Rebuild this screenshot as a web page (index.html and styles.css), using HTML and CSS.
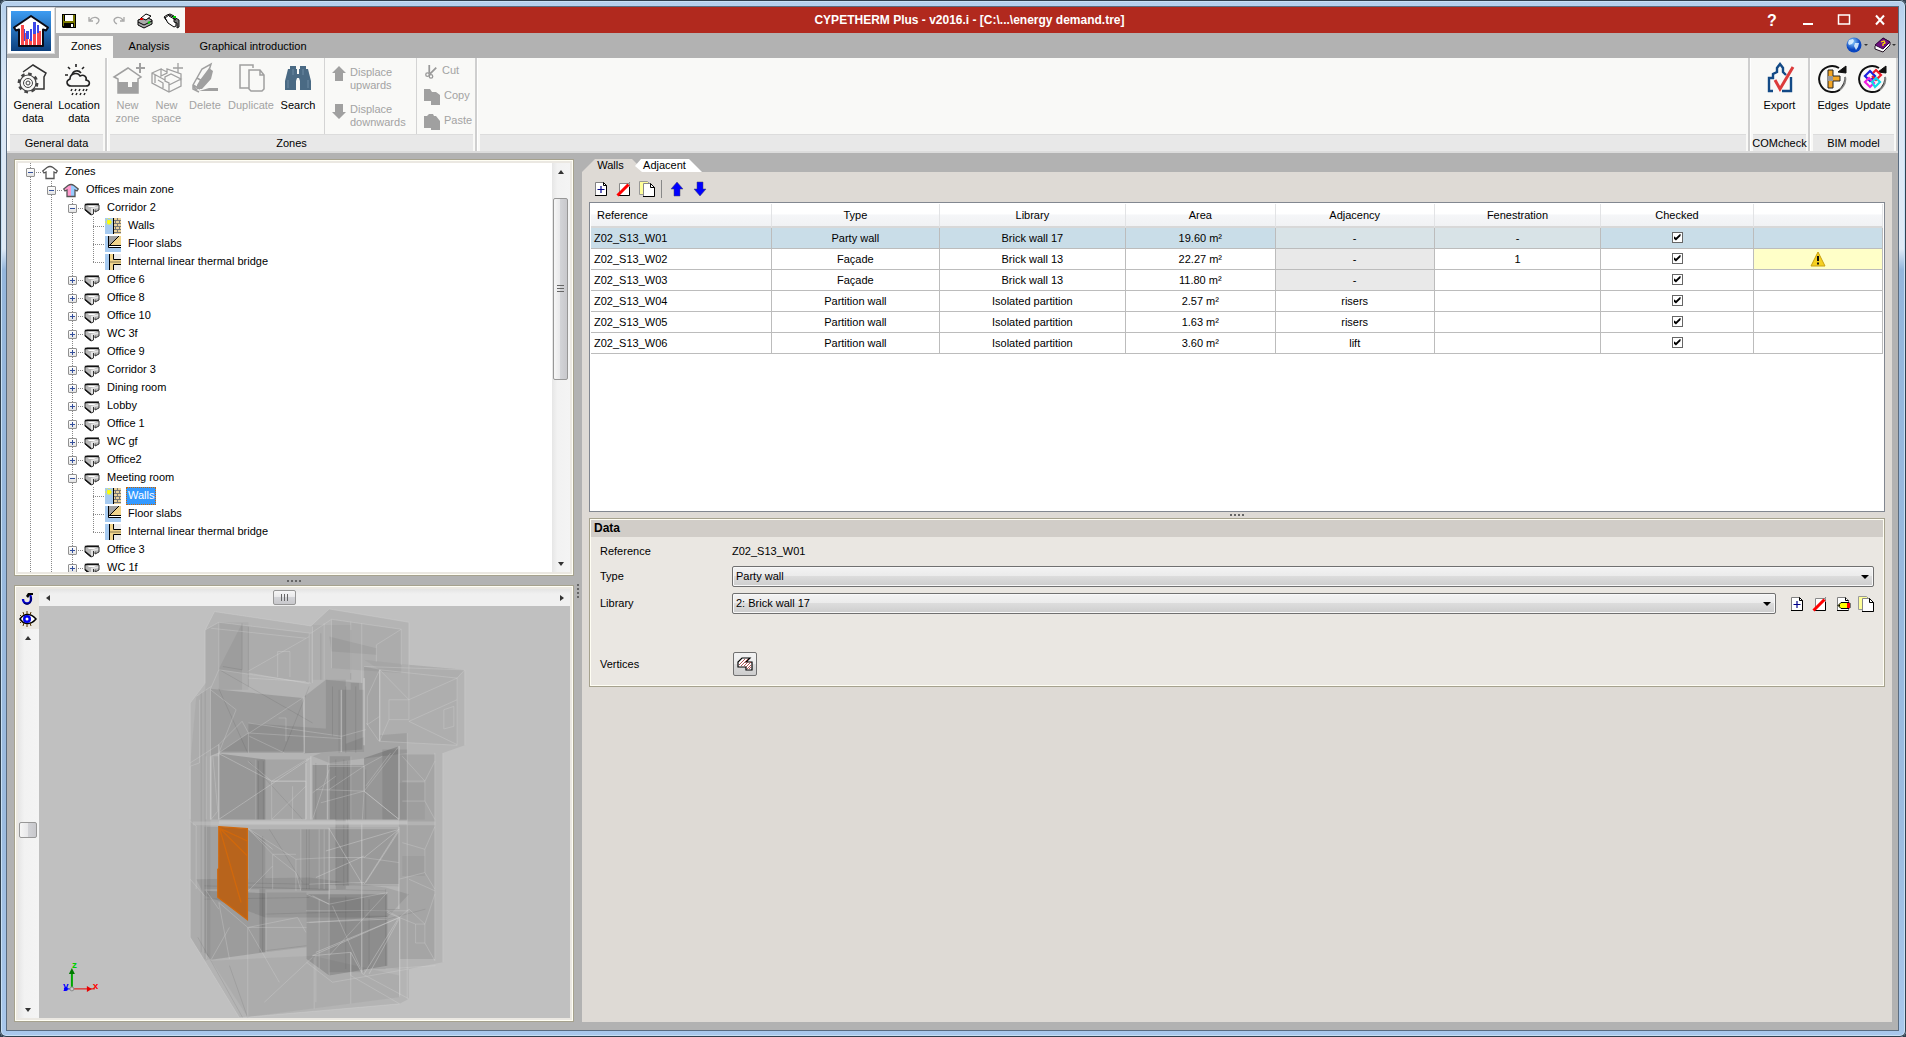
FILE: index.html
```html
<!DOCTYPE html>
<html lang="en">
<head>
<meta charset="utf-8">
<title>CYPETHERM Plus</title>
<link rel="stylesheet" href="styles.css">
</head>
<body>
<svg class="sprite" aria-hidden="true">
  <symbol id="i-space" viewBox="0 0 16 16"><path d="M1 5l2-1h12v6l-4 2V9H9v5l-2 1-6-5z" fill="#b8b8b8"/><path d="M3 5h11l-4 2H5z" fill="#fff"/><path d="M7 8l8-2v2l-6 1v5l-2 1z" fill="#e4e4e4"/><path d="M15 5v5l-4 2V9.500M9.500 9v5L7 15l-6-5V5l2-1h12" fill="none" stroke="#333"/><path d="M.8 4.500h14M1 9.500L7 14.500" stroke="#111" stroke-width="1.600"/></symbol>
  <symbol id="i-wall" viewBox="0 0 16 16"><path fill="#a6caf0" d="M0 0h8v16H0z"/><path fill="#e8d09a" d="M9 0h7v16H9z"/><path d="M8.500 0v16" stroke="#000"/><path d="M9 2.500h7M9 5.500h7M9 8.500h7M9 11.500h7M9 14.500h7M12.500 0v2M10.500 3v2M14.500 3v2M12.500 6v2M10.500 9v2M14.500 9v2M12.500 12v2" stroke="#777"/><circle cx="4" cy="4" r="2" fill="#ff0"/><path d="M4 0v8M0 4h8M1 1l6 6M7 1L1 7" stroke="#ff0" stroke-dasharray="1 1"/></symbol>
  <symbol id="i-floor" viewBox="0 0 16 16"><path fill="#a6caf0" d="M0 0h16v16H0z"/><path fill="#a0a0a0" d="M4 0h10L4 10z"/><path fill="#f0d48c" d="M14 0h2v9H5z"/><path d="M3.500 0v11.500H16M4 10L14 0M4 9.500h12" fill="none" stroke="#000"/><path fill="#fff" d="M4 10h12v1H4z"/></symbol>
  <symbol id="i-bridge" viewBox="0 0 16 16"><path fill="#ececec" d="M0 0h16v16H0z"/><path fill="#a6caf0" d="M0 0h4v16H0z"/><path fill="#f0d48c" d="M5 0h3v16H5zM8 6h8v4H8z"/><path d="M4.500 0v16M8.500 0v5.500H16M16 10.500H8.500V16" fill="none" stroke="#000"/><path d="M5 8h11" stroke="#8a7a50"/></symbol>
  <symbol id="i-new" viewBox="0 0 16 16"><path d="M2.500 1.500h8l3 3v10h-11z" fill="#fff" stroke="#808080"/><path d="M2 14.500h11.500V4.500l-3-3v3h3" fill="none" stroke="#000"/><path d="M8 5v7M4.500 8.500h7" stroke="#00008b" stroke-width="1.200"/></symbol>
  <symbol id="i-del" viewBox="0 0 16 16"><path d="M3.500 2.500h10v12h-10z" fill="#fff" stroke="#888"/><path d="M3 14.500h10.500V6" fill="none" stroke="#000"/><path d="M2 14L14 1" stroke="#888"/><path d="M1.500 14.500L12.500 3.500" stroke="#f00" stroke-width="3"/></symbol>
  <symbol id="i-dup" viewBox="0 0 16 16"><path d="M.5.500h8l2 2v11H.5z" fill="#ff9" stroke="#999"/><path d="M4.500 2.500h7l4 4v9h-11z" fill="#fff" stroke="#888"/><path d="M4 15.500h11.500v-9l-4-4v4h4" fill="none" stroke="#000"/></symbol>
  <symbol id="i-edit" viewBox="0 0 16 16"><path d="M2.500 1.500h8l3 3v10h-11z" fill="#fff" stroke="#808080"/><path d="M2 14.500h11.500M10.500 1.500v3h3" fill="none" stroke="#000"/><path d="M3 9.500l3-3h8l1 1v4l-1 1H6z" fill="#ff0" stroke="#000"/><path fill="#f00" d="M12 7h3v5h-3z"/><path fill="#000" d="M3 9.500l2-1v2z"/></symbol>
  <symbol id="i-up" viewBox="0 0 14 16"><path d="M7 1l6 7h-3v7H4V8H1z" fill="#00f" stroke="#446" stroke-width=".5"/></symbol>
  <symbol id="i-gup" viewBox="0 0 14 16"><path d="M7 0l7 7h-3v8H3V7H0z" fill="#a0a0a0"/></symbol>
  <symbol id="i-arrow" viewBox="0 0 8 8"><path d="M1 6l3-4 3 4z" fill="#333"/></symbol>
  <symbol id="i-turn" viewBox="0 0 32 32"><path d="M22 5a13 13 0 1 0 6 9" fill="none" stroke="#111" stroke-width="2"/><path d="M28 14a13 13 0 0 1-5 13" fill="none" stroke="#f9f9f7" stroke-width="2" opacity=".5"/><path d="M29 3v7l-8-1z" fill="#111" stroke="#111"/></symbol>
</svg>

<div class="window">
  <div class="client">
    <header class="top">
      <button class="app" aria-label="Application menu">
        <svg width="40" height="40" viewBox="0 0 40 40"><defs><linearGradient id="ab" x2="0" y2="1"><stop stop-color="#3d9cf2"/><stop offset="1" stop-color="#0b3f7d"/></linearGradient></defs><path fill="url(#ab)" d="M0 0h40v40H0z"/><path d="M20 5l17 11.500-2 3-3-1V35H8V18.500l-3 1-2-3z" fill="#fff" stroke="#0a0a14" stroke-width="2" stroke-linejoin="round"/><path fill="#f8484a" d="M10 14h3v20h-3zM14 22h3v12h-3zM18 28h3v6h-3zM22 22h3v12h-3zM26 16h2v18h-2zM28 20h2v14h-2z"/><path fill="#3c48e8" d="M13 18h1v12h-1zM15 20h3v8h-3zM19 18h2v12h-2zM22 11h3v12h-3zM26 14h2v8h-2z"/></svg>
      </button>
      <div class="top-main">
        <div class="titlebar">
          <div class="qat">
            <button aria-label="Save"><svg width="16" height="16" viewBox="0 0 16 16"><path d="M1 1h14v14H2l-1-1z" fill="#000"/><path d="M2 2h1v11H2zM12 2h2v12h-1v-4H3V8h9z" fill="#7a7a00"/><path d="M4 2h8v6H4z" fill="#fff"/><path d="M10 11h2v3h-2z" fill="#fff"/></svg></button>
            <button aria-label="Undo"><svg width="16" height="16" viewBox="0 0 16 16"><path d="M3 4v4h4M4 7c3-4 8-3 9 0 0 2-1 3-3 4" fill="none" stroke="#a8a8a8" stroke-width="1.300"/></svg></button>
            <button aria-label="Redo"><svg width="16" height="16" viewBox="0 0 16 16"><path d="M13 4v4H9M12 7C9 3 4 4 3 7c0 2 1 3 3 4" fill="none" stroke="#a8a8a8" stroke-width="1.300"/></svg></button>
            <button aria-label="Print"><svg width="18" height="16" viewBox="0 0 18 16"><path d="M2 7l8-3 6 3v4l-8 4-6-3z" fill="#aaa" stroke="#000"/><path d="M5 5l5-4 5 2-5 4z" fill="#fff" stroke="#000"/><path d="M2 9l6 3 8-4" fill="none" stroke="#000"/><path d="M4 6h3" stroke="#d00" stroke-width="2"/><path d="M12 10l2-1" stroke="#0c0" stroke-width="2"/></svg></button>
            <button aria-label="Print setup"><svg width="18" height="16" viewBox="0 0 18 16"><path d="M2 5l4-3 7 3v8l-2 1-6-4z" fill="#fff" stroke="#000"/><path d="M1 4l3-2 3-1 4 2M4 8L1 4" fill="none" stroke="#000"/><path d="M11 4l5 3v7l-2 1v-5l-3-1z" fill="#777" stroke="#111"/><path d="M10 4h3" stroke="#0c0" stroke-width="2"/><path d="M6 3l7 4" stroke="#000"/></svg></button>
          </div>
          <h1 class="title">CYPETHERM Plus - v2016.i - [C:\...\energy demand.tre]</h1>
          <div class="controls">
            <button class="help" aria-label="Help">?</button>
            <button aria-label="Minimize"><svg width="14" height="14" viewBox="0 0 14 14"><path d="M2 10h10v2H2z" fill="#fff"/></svg></button>
            <button aria-label="Maximize"><svg width="14" height="14" viewBox="0 0 14 14"><path d="M1.500 2h11v9h-11z" fill="none" stroke="#fff" stroke-width="1.500"/></svg></button>
            <button aria-label="Close"><svg width="14" height="14" viewBox="0 0 14 14"><path d="M3 2.500l8 9M11 2.500l-8 9" stroke="#fff" stroke-width="2"/></svg></button>
          </div>
        </div>
        <nav class="menu">
          <button class="menu-tab on">Zones</button>
          <button class="menu-tab">Analysis</button>
          <button class="menu-tab">Graphical introduction</button>
          <div class="menu-right">
            <button aria-label="Web"><svg width="24" height="16" viewBox="0 0 24 16"><defs><radialGradient id="gl" cx=".4" cy=".3"><stop stop-color="#8fd0ff"/><stop offset="1" stop-color="#0845c0"/></radialGradient></defs><circle cx="8" cy="8" r="7.500" fill="url(#gl)"/><path d="M3 3l4-1 1 2-2 3-3 1-1-2zM9 6l4 0-1 4-2 3-2-4z" fill="#e4f4ff" opacity=".85"/><path d="M18 7h4l-2 2z" fill="#333"/></svg></button>
            <button aria-label="Manual"><svg width="24" height="16" viewBox="0 0 24 16"><path d="M1 9l8-8 7 4v3l-7 7-8-3z" fill="#fff" stroke="#201020"/><path d="M1 8l8-7 7 4-7 7z" fill="#701080" stroke="#30083a"/><path d="M7 5l3-1 1 2-2 1v2" fill="none" stroke="#fd0" stroke-width="1.300"/><path d="M18 7h4l-2 2z" fill="#333"/></svg></button>
          </div>
        </nav>
      </div>
    </header>

    <section class="ribbon" aria-label="Ribbon">
      <div class="group g-general">
        <div class="tools">
          <button class="big w46"><svg width="32" height="32" viewBox="0 0 32 32"><path d="M6 9l10-7 13 8-2 4v12H15" fill="none" stroke="#333" stroke-width="1.500"/><circle cx="11" cy="20" r="8" fill="#f9f9f7" stroke="#444" stroke-width="1.200"/><circle cx="11" cy="20" r="9.200" fill="none" stroke="#444" stroke-width="2.400" stroke-dasharray="3.600 3.600"/><circle cx="11" cy="20" r="4.500" fill="none" stroke="#444"/><circle cx="11" cy="20" r="2" fill="none" stroke="#444"/></svg><span>General data</span></button>
          <button class="big w46"><svg width="32" height="32" viewBox="0 0 32 32"><g fill="none" stroke="#222" stroke-width="1.600"><path d="M13 1v3M5 4l2 2M21 4l-2 2M2 12h3M9 12a5 5 0 0 1 9-2"/><path d="M8 23c-4 0-6-5-1-7 0-6 8-7 10-3 4-2 7 1 6 4 5 1 4 6 0 6z"/></g><path d="M9 26l-1 2M13 26l-1 2M17 26l-1 2M21 26l-1 2M24 26l-1 2M10 30l-1 2M14 30l-1 2M18 30l-1 2M22 30l-1 2" stroke="#222" stroke-width="1.500"/></svg><span>Location data</span></button>
        </div>
        <div class="caption">General data</div>
      </div>
      <div class="group g-zones">
        <div class="tools">
          <button class="big w39" disabled><svg width="32" height="32" viewBox="0 0 32 32"><path d="M6 16v14h20V16l3-2-13-9L2 14z" fill="none" stroke="#a0a0a0" stroke-width="1.500"/><path d="M6 19h10v5h4v-5h6v11H6zM24 4h9v2h-9zM27 0h2v10h-2z" fill="#a0a0a0"/></svg><span>New zone</span></button>
          <button class="big w39" disabled><svg width="32" height="32" viewBox="0 0 32 32"><path d="M1 10l9-4v7l6-3v-4l14 5v12l-12 6L1 20zM1 10l13 7M18 29v-9l-4-2v-4l6-3 10 5-12 6M4 12v8M10 6l6 3M22 5h10M27 0v10M7 17l5 3v5" fill="none" stroke="#a0a0a0" stroke-width="1.300"/></svg><span>New space</span></button>
          <button class="big w38" disabled><svg width="32" height="32" viewBox="0 0 32 32"><path d="M4 22L13 6l9-5-4 13-11 13zM4 22l7 4M4 22v4l6 3M8 15l7 4" fill="none" stroke="#a0a0a0" stroke-width="1.500"/><path d="M11 17L20 5l4 3-2 8-9 10H8v-4zM10 28l10-3h9v3z" fill="#a0a0a0"/></svg><span>Delete</span></button>
          <button class="big w54" disabled><svg width="32" height="32" viewBox="0 0 32 32"><path d="M14 25H5V2h13v3M14 7h11l4 5v14l-2 2H16l-2-2zM25 7v5h4" fill="none" stroke="#a0a0a0" stroke-width="1.500"/></svg><span>Duplicate</span></button>
          <button class="big w40"><svg width="32" height="32" viewBox="0 0 32 32"><path d="M8 3h6v3h1v5h2V6h1V3h6v3h2l3 12v9H18v-9l-1-3h-2l-1 3v9H3v-9L6 6h2z" fill="#4a6a84"/><path d="M6 17v8M26 17v8M11 6v6M21 6v6" stroke="#6c8aa3"/></svg><span>Search</span></button>
          <div class="stack wide">
            <button class="small" disabled><svg width="14" height="16"><use href="#i-gup"/></svg><span>Displace upwards</span></button>
            <button class="small" disabled><svg class="flip" width="14" height="16"><use href="#i-gup"/></svg><span>Displace downwards</span></button>
          </div>
          <div class="stack">
            <button class="small" disabled><svg width="14" height="16" viewBox="0 0 16 16"><path d="M6 0v9M14 3L6 11" stroke="#999" stroke-width="2"/><circle cx="4" cy="11" r="2" fill="none" stroke="#999" stroke-width="1.500"/><circle cx="8" cy="13" r="2" fill="none" stroke="#999" stroke-width="1.500"/></svg><span>Cut</span></button>
            <button class="small" disabled><svg width="16" height="16" viewBox="0 0 16 16"><path d="M0 0h6l2 3h4l4 3v10H7v-4H0z" fill="#a0a0a0"/></svg><span>Copy</span></button>
            <button class="small" disabled><svg width="16" height="16" viewBox="0 0 16 16"><path d="M0 2h3l2-2h4l1 2h2l4 5v9H7v-2H0z" fill="#a0a0a0"/></svg><span>Paste</span></button>
          </div>
        </div>
        <div class="caption">Zones</div>
      </div>
      <div class="group g-fill"><div class="tools"></div><div class="caption"></div></div>
      <div class="group g-com">
        <div class="tools">
          <button class="big w54"><svg width="32" height="32" viewBox="0 0 32 32"><path d="M9 28H5V15h4v-4l4-2V5l3-4 3 4v4l3 3M27 14v14h-9" fill="none" stroke="#134a86" stroke-width="2.400"/><path d="M11 17l5 9L29 4" fill="none" stroke="#dc3b3b" stroke-width="3"/></svg><span>Export</span></button>
        </div>
        <div class="caption">COMcheck</div>
      </div>
      <div class="group g-bim">
        <div class="tools">
          <button class="big w40"><svg width="32" height="32"><use href="#i-turn"/><path d="M11 7h5v6h7v5h-7v7h-5z" fill="#f5a623" stroke="#222"/><path d="M11 13h5v5h-5z" fill="#999"/></svg><span>Edges</span></button>
          <button class="big w40"><svg width="32" height="32"><use href="#i-turn"/><g fill="none" stroke-width="2.200"><path d="M8 13l5-5 5 5-5 5z" stroke="#1a20e0"/><path d="M16 10l3-3 5 5-5 5-4-4" stroke="#f01c2c"/><path d="M8 19l4-4 5 5-4 4z" stroke="#f020e0"/><path d="M15 19l4-4 4 4-5 5z" stroke="#10d8e8"/></g></svg><span>Update</span></button>
        </div>
        <div class="caption">BIM model</div>
      </div>
    </section>

    <main class="work">
      <div class="left">
        <section class="frame tree-frame" aria-label="Zones tree">
          <div class="tree">
            <div class="row"><i class="g v top"><button class="ex minus" aria-label="Collapse"></button></i><svg class="ic" viewBox="0 0 16 16"><path d="M4 14.500V8L2 9 .7 7 5 3.500Q8 1.500 11 3.500L15.300 7 14 9l-2-1v6.500z" fill="#fff" stroke="#555" stroke-width="1.300"/></svg><span>Zones</span></div>
            <div class="row"><i class="g v"></i><i class="g v"><button class="ex minus" aria-label="Collapse"></button></i><svg class="ic" viewBox="0 0 16 16"><path fill="#f9c" d="M4 14.500V8L2 9 .7 7 5 3.500 8 2.500v12z"/><path fill="#9cf" d="M8 2.500l3 1L15.300 7 14 9l-2-1v6.500H8z"/><path d="M4 14.500V8L2 9 .7 7 5 3.500Q8 1.500 11 3.500L15.300 7 14 9l-2-1v6.500z" fill="none" stroke="#555" stroke-width="1.300"/></svg><span>Offices main zone</span></div>
            <div class="row"><i class="g v"></i><i class="g v"></i><i class="g v"><button class="ex minus" aria-label="Collapse"></button></i><svg class="ic"><use href="#i-space"/></svg><span>Corridor 2</span></div>
            <div class="row"><i class="g v"></i><i class="g v"></i><i class="g v"></i><i class="g v leaf"></i><svg class="ic"><use href="#i-wall"/></svg><span>Walls</span></div>
            <div class="row"><i class="g v"></i><i class="g v"></i><i class="g v"></i><i class="g v leaf"></i><svg class="ic"><use href="#i-floor"/></svg><span>Floor slabs</span></div>
            <div class="row"><i class="g v"></i><i class="g v"></i><i class="g v"></i><i class="g v leaf last"></i><svg class="ic"><use href="#i-bridge"/></svg><span>Internal linear thermal bridge</span></div>
            <div class="row"><i class="g v"></i><i class="g v"></i><i class="g v"><button class="ex plus" aria-label="Expand"></button></i><svg class="ic"><use href="#i-space"/></svg><span>Office 6</span></div>
            <div class="row"><i class="g v"></i><i class="g v"></i><i class="g v"><button class="ex plus" aria-label="Expand"></button></i><svg class="ic"><use href="#i-space"/></svg><span>Office 8</span></div>
            <div class="row"><i class="g v"></i><i class="g v"></i><i class="g v"><button class="ex plus" aria-label="Expand"></button></i><svg class="ic"><use href="#i-space"/></svg><span>Office 10</span></div>
            <div class="row"><i class="g v"></i><i class="g v"></i><i class="g v"><button class="ex plus" aria-label="Expand"></button></i><svg class="ic"><use href="#i-space"/></svg><span>WC 3f</span></div>
            <div class="row"><i class="g v"></i><i class="g v"></i><i class="g v"><button class="ex plus" aria-label="Expand"></button></i><svg class="ic"><use href="#i-space"/></svg><span>Office 9</span></div>
            <div class="row"><i class="g v"></i><i class="g v"></i><i class="g v"><button class="ex plus" aria-label="Expand"></button></i><svg class="ic"><use href="#i-space"/></svg><span>Corridor 3</span></div>
            <div class="row"><i class="g v"></i><i class="g v"></i><i class="g v"><button class="ex plus" aria-label="Expand"></button></i><svg class="ic"><use href="#i-space"/></svg><span>Dining room</span></div>
            <div class="row"><i class="g v"></i><i class="g v"></i><i class="g v"><button class="ex plus" aria-label="Expand"></button></i><svg class="ic"><use href="#i-space"/></svg><span>Lobby</span></div>
            <div class="row"><i class="g v"></i><i class="g v"></i><i class="g v"><button class="ex plus" aria-label="Expand"></button></i><svg class="ic"><use href="#i-space"/></svg><span>Office 1</span></div>
            <div class="row"><i class="g v"></i><i class="g v"></i><i class="g v"><button class="ex plus" aria-label="Expand"></button></i><svg class="ic"><use href="#i-space"/></svg><span>WC gf</span></div>
            <div class="row"><i class="g v"></i><i class="g v"></i><i class="g v"><button class="ex plus" aria-label="Expand"></button></i><svg class="ic"><use href="#i-space"/></svg><span>Office2</span></div>
            <div class="row"><i class="g v"></i><i class="g v"></i><i class="g v"><button class="ex minus" aria-label="Collapse"></button></i><svg class="ic"><use href="#i-space"/></svg><span>Meeting room</span></div>
            <div class="row"><i class="g v"></i><i class="g v"></i><i class="g v"></i><i class="g v leaf"></i><svg class="ic"><use href="#i-wall"/></svg><span class="sel">Walls</span></div>
            <div class="row"><i class="g v"></i><i class="g v"></i><i class="g v"></i><i class="g v leaf"></i><svg class="ic"><use href="#i-floor"/></svg><span>Floor slabs</span></div>
            <div class="row"><i class="g v"></i><i class="g v"></i><i class="g v"></i><i class="g v leaf last"></i><svg class="ic"><use href="#i-bridge"/></svg><span>Internal linear thermal bridge</span></div>
            <div class="row"><i class="g v"></i><i class="g v"></i><i class="g v"><button class="ex plus" aria-label="Expand"></button></i><svg class="ic"><use href="#i-space"/></svg><span>Office 3</span></div>
            <div class="row"><i class="g v"></i><i class="g v"></i><i class="g v"><button class="ex plus" aria-label="Expand"></button></i><svg class="ic"><use href="#i-space"/></svg><span>WC 1f</span></div>
          </div>
          <div class="vbar">
            <button class="arr" aria-label="Scroll up"><svg width="8" height="8"><use href="#i-arrow"/></svg></button>
            <div class="vtrack"><div class="space-a"></div><div class="thumb vthumb"><b></b></div><div class="space-b"></div></div>
            <button class="arr" aria-label="Scroll down"><svg class="flip" width="8" height="8"><use href="#i-arrow"/></svg></button>
          </div>
        </section>
        <div class="split h"><b></b><b></b><b></b><b></b></div>
        <section class="frame view-frame" aria-label="3D view">
          <div class="view-side">
            <button class="mini" aria-label="Reset view"><svg width="14" height="14" viewBox="0 0 14 14"><path d="M2 7c0 6 8 6 8 0 0-2 0-3-1-4" fill="none" stroke="#00c" stroke-width="2.400"/><path d="M3 11c4 3 8 0 7-6" fill="none" stroke="#003" stroke-width="1"/><path d="M5 4l2-3h5v2H9L7 6z" fill="#000"/></svg></button>
            <button class="mini" aria-label="Visibility"><svg width="18" height="16" viewBox="0 0 18 16"><path d="M1 8c4-6 11-6 16 0-5 6-12 6-16 0z" fill="#fff" stroke="#000" stroke-width="1.500"/><circle cx="8" cy="8" r="4" fill="#00e"/><circle cx="8" cy="8" r="1.500" fill="#fff"/><path d="M8 0v3M4 1l1 3M12 1l-1 3M8 13v3M4 15l1-3M12 15l-1-3M1 4l2 2M1 12l2-2" stroke="#530"/></svg></button>
            <div class="vbar">
              <button class="arr" aria-label="Tilt up"><svg width="8" height="8"><use href="#i-arrow"/></svg></button>
              <div class="vtrack mid"><div class="thumb tilt"></div></div>
              <button class="arr" aria-label="Tilt down"><svg class="flip" width="8" height="8"><use href="#i-arrow"/></svg></button>
            </div>
          </div>
          <div class="view-main">
            <div class="hbar">
              <button class="arr" aria-label="Rotate left"><svg class="ccw" width="8" height="8"><use href="#i-arrow"/></svg></button>
              <div class="htrack"><div class="thumb hthumb"><b></b></div></div>
              <button class="arr" aria-label="Rotate right"><svg class="cw" width="8" height="8"><use href="#i-arrow"/></svg></button>
            </div>
            <svg class="scene" viewBox="0 0 531 413" preserveAspectRatio="xMinYMax meet">
              <g transform="translate(131 -16) scale(.33333)">
                <path fill="#b4b4b4" d="M135 65L425 108 480 57 720 97V225L888 240V467L822 490V1120L720 1140V1230L692 1245 210 1287 62 1045V340L107 280V120z"/>
                <g fill="#000">
                  <path opacity=".04" d="M148 97L425 130V280L148 240zM487 88L697 118V250L487 235zM107 120L148 97V300L123 297 107 320zM80 320L123 290V1110L107 1115 62 1045V520z"/>
                  <path opacity=".03" d="M148 97H237V300H148zM430 105H545V270H430zM585 210L720 225 888 240 865 265 632 240zM632 240L865 265V467L632 455z"/>
                  <path opacity=".05" d="M148 237L218 100V300H148zM480 140L622 175V195L487 185z"/>
                  <path opacity=".13" d="M123 297L400 325 405 490H148L123 500z"/>
                  <path opacity=".1" d="M405 320L470 270 580 280V480L405 492z"/>
                  <path opacity=".08" d="M237 400L517 420V490H148L237 430zM470 270H530V490H470zM585 230L632 240V455L585 467zM590 440L715 430V490L480 520 430 500z"/>
                  <path opacity=".07" d="M517 300H585V487H517zM545 280H570V487H545z"/>
                  <path opacity=".16" d="M148 492L288 510V690H148zM585 505L690 470V690H585zM430 525H585V690H430z"/>
                  <path opacity=".08" d="M125 500H148V690H125zM260 510H410V690H260zM270 510H288V690H270zM640 480H715V690H640z"/>
                  <path opacity=".1" d="M480 500H545V690H480zM500 510H530V900H500zM517 700H540V890H517z"/>
                  <path opacity=".1" d="M105 712H148V900H105zM237 720H395V900H237zM270 730H288V1090H270z"/>
                  <path opacity=".14" d="M395 720H480V905H395zM480 715H585V885H480zM585 715H690V885H585z"/>
                  <path opacity=".08" d="M80 870L420 865 650 895 720 915 655 985 288 985 105 920zM237 720L288 750V900H237z"/>
                  <path opacity=".13" d="M105 905L288 912V1090L125 1112 105 1090z"/>
                  <path opacity=".15" d="M412 915H655V1130L480 1160 412 1110z"/>
                  <path opacity=".08" d="M288 910H412V1075L288 1090zM480 925H585V1150H480zM570 980H692V1140H570zM655 960H690V1140H655zM690 495H798V1110H690z"/>
                  <path opacity=".04" d="M125 1115L430 1100 692 1160V1225L235 1285zM690 580H768V690H690zM700 800H768V860H700z"/>
                </g>
                <g fill="none" stroke="#000" stroke-opacity=".08" stroke-width="3">
                  <path d="M218 100V240L160 230M237 110V290M545 120V270M95 310V1090M107 300V1110M267 515V690M282 515V690M280 740V1090M440 520V690M455 130V270M500 510V890M524 510V890M535 515V885M420 720V900M412 720V900M530 920V1140M600 930V1140M650 900V1130M590 540V690M235 1287L180 1130M85 1045L220 1287M288 1085L412 1070M655 990L770 960M150 240L430 400M148 297L235 490M420 290L340 490M240 515L400 690M300 720L400 880M530 290V490M560 290V490M490 290V440M510 300V490M105 890L650 905M105 930L420 925M150 880L690 890M288 975L650 965"/>
                </g>
                <g fill="none" stroke="#d8d8d8" stroke-opacity=".3" stroke-width="3">
                  <path d="M135 65L107 120V280L62 340V1045L210 1287L692 1245M135 65L425 108 480 57 720 97V240M107 120L148 97 425 130 487 88 697 118 622 165V215M125 115L410 145M148 97V240L425 280M148 240L123 297V500M420 130V280M430 110V280M465 100V270M487 88V235M545 95V250M578 100V280M237 250L420 282M237 265L410 275M235 245L420 140M325 185H362V262M325 185V262"/>
                  <path d="M697 118V225M632 240L865 265V467L632 455zM585 230L888 240V467M865 265L888 240M632 240L720 330H660V390H720V240M660 390L632 455M720 395L865 465M720 330L865 265M720 395L865 330M825 360L855 350V410L825 418zM595 320L632 240M595 320V405L632 380M585 265V467M592 400L630 455"/>
                  <path d="M80 320L125 290M62 520L148 465 218 395 237 430 517 447 M148 490L237 430V490M123 500L148 490M237 400L517 440 590 420M123 300L200 360 148 490M240 430L400 325M328 385H350V455M240 440L345 490M90 330V520L62 530V690M110 500V690M715 430V1230M690 470V690M798 490V1115M822 490V1120M700 575H768V635H700M768 575L798 515M768 635L798 690M700 500L768 575"/>
                  <path d="M148 490V690M125 500V690L145 665L130 500M260 510V690M307 575H410V690H307zM307 575L235 515M307 575L420 505M307 690L410 590M370 590V690M430 525H585V605L440 600M430 690L480 540M480 500V690M545 500V690M585 605L690 470M585 605L690 690M580 690L585 605M455 640L585 605M430 610L500 560M480 600L585 530L640 500M590 590L665 490"/>
                  <path d="M148 712V925M110 712V1110M80 710V900M62 695L80 710M237 718L310 795 380 850 395 905M237 718L380 810M310 795V900M310 795H380M380 810L480 805M380 810V905M395 720V900M450 720V900M465 720V900M237 905L310 830M62 870L105 920M585 805L690 820M768 850L690 870M768 780V850M798 905L720 870M768 780L798 712M700 760L768 780M768 850L798 900"/>
                  <path d="M148 940L180 1110M148 940L235 1015H412M235 1015V1285M125 1112L180 1015M237 1015L385 985 410 1030M290 910V1090M110 905L148 960M412 915L480 945 655 910M450 930V1140M480 930V1160M545 1090V1245M435 1105V1260M440 1100V1240M412 1120L490 1180 720 1140M420 1000L655 985M410 965L720 965M480 1100L655 910M692 985V1225M655 965L692 985 720 960M580 1155L720 1230M545 1160L692 1245M490 950L580 1150M740 1005H768V1062H740zM690 985L740 1005M768 1005L798 915M768 1062L798 1115M720 960L768 1005M285 1240L430 1105M235 1015L330 1180M650 1140L800 1130"/>
                </g>
                <g fill="none" stroke="#d4d4d4" stroke-opacity=".5" stroke-width="4">
                  <path d="M148 465V690M123 500V690M410 520V690M425 500V690M405 320V490M480 715V930M578 700V1150M690 712V960M517 300V487M632 240V455M585 265V467M475 525V690M690 470V690M692 985V1220"/>
                  <path stroke-width="2.500" d="M148 690L425 505M148 492L307 575H410M480 718L580 885M480 805H585L690 720M690 720L470 785M440 865L585 800M585 885L690 720M590 880L690 725M420 885L585 880M148 488H405M480 530H585V605L690 690M692 985L430 1100 545 1090 580 1155M692 985L440 1090M690 985L585 1155M690 990L600 1155M148 712L237 718M690 718H480M237 720L310 780M430 920L480 945M412 1000L655 990M545 1090V1160M655 970L690 985"/>
                </g>
                <path d="M70 702H800" stroke="#c6c6c6" stroke-opacity=".45" stroke-width="12"/>
                <path d="M148 699H715" stroke="#ccc" stroke-opacity=".5" stroke-width="12"/>
                <path fill="#b8641c" d="M148 712L234 718V992L145 924V840L148 838z"/>
                <path d="M148 712L234 718V992L145 924V840L148 838z M150 716L215 940M150 716L234 800M150 716L234 755" fill="none" stroke="#d0680c" stroke-width="4"/>
              </g>
              <path d="M33 384V369" stroke="#00a800" stroke-width="2"/><path d="M30 369l3-6 3 6z" fill="#007800"/>
              <path d="M34 384h22" stroke="#e80000"/><path d="M48 381l5 3-5 3z" fill="#e80000"/><path d="M25 384h6" stroke="#00f"/><circle cx="27" cy="384" r="2" fill="#00f"/><circle cx="33" cy="384" r="2" fill="#ccc" stroke="#888"/>
              <g class="axis"><text x="33" y="363" fill="#00d000">z</text><text x="54" y="384" fill="#f00">x</text><text x="24" y="384" fill="#00f">y</text></g>
            </svg>
          </div>
        </section>
      </div>
      <div class="split v"><b></b><b></b><b></b><b></b></div>
      <div class="right">
        <div class="tabs">
          <button class="tab tab-walls">Walls</button><button class="tab tab-adj">Adjacent</button>
        </div>
        <div class="pane">
          <div class="toolbar">
            <button aria-label="New wall"><svg width="16" height="16"><use href="#i-new"/></svg></button>
            <button aria-label="Delete wall"><svg width="16" height="16"><use href="#i-del"/></svg></button>
            <button aria-label="Copy wall"><svg width="16" height="16"><use href="#i-dup"/></svg></button>
            <i class="sep"></i>
            <button aria-label="Move up"><svg width="14" height="16"><use href="#i-up"/></svg></button>
            <button aria-label="Move down"><svg class="flip" width="14" height="16"><use href="#i-up"/></svg></button>
          </div>
          <div class="grid">
            <table>
              <colgroup><col class="c1"><col class="c2"><col class="c3"><col class="c4"><col class="c5"><col class="c6"><col class="c7"><col></colgroup>
              <thead><tr><th>Reference</th><th>Type</th><th>Library</th><th>Area</th><th>Adjacency</th><th>Fenestration</th><th>Checked</th><th></th></tr></thead>
              <tbody>
                <tr class="on"><td>Z02_S13_W01</td><td>Party wall</td><td>Brick wall 17</td><td>19.60 m²</td><td class="off">-</td><td class="off">-</td><td><input type="checkbox" checked aria-label="Z02_S13_W01 checked"></td><td></td></tr>
                <tr><td>Z02_S13_W02</td><td>Façade</td><td>Brick wall 13</td><td>22.27 m²</td><td class="off">-</td><td>1</td><td><input type="checkbox" checked aria-label="Z02_S13_W02 checked"></td><td class="warn"><svg width="16" height="16" viewBox="0 0 16 16"><path d="M8 1l7 14H1z" fill="#f5d020" stroke="#c8a010" stroke-linejoin="round"/><path d="M8 5v5M8 11.500v2" stroke="#111" stroke-width="2"/></svg></td></tr>
                <tr><td>Z02_S13_W03</td><td>Façade</td><td>Brick wall 13</td><td>11.80 m²</td><td class="off">-</td><td></td><td><input type="checkbox" checked aria-label="Z02_S13_W03 checked"></td><td></td></tr>
                <tr><td>Z02_S13_W04</td><td>Partition wall</td><td>Isolated partition</td><td>2.57 m²</td><td>risers</td><td></td><td><input type="checkbox" checked aria-label="Z02_S13_W04 checked"></td><td></td></tr>
                <tr><td>Z02_S13_W05</td><td>Partition wall</td><td>Isolated partition</td><td>1.63 m²</td><td>risers</td><td></td><td><input type="checkbox" checked aria-label="Z02_S13_W05 checked"></td><td></td></tr>
                <tr><td>Z02_S13_W06</td><td>Partition wall</td><td>Isolated partition</td><td>3.60 m²</td><td>lift</td><td></td><td><input type="checkbox" checked aria-label="Z02_S13_W06 checked"></td><td></td></tr>
              </tbody>
            </table>
          </div>
          <div class="split s"><b></b><b></b><b></b><b></b></div>
          <section class="data">
            <h2>Data</h2>
            <div class="fields">
              <div class="field ref"><span class="name">Reference</span><span>Z02_S13_W01</span></div>
              <div class="field"><label class="name" for="type">Type</label><div class="pick"><select id="type"><option>Party wall</option><option>Façade</option><option>Partition wall</option></select></div></div>
              <div class="field"><label class="name" for="lib">Library</label><div class="pick"><select id="lib"><option>2: Brick wall 17</option></select></div>
                <div class="lib-tools">
                  <button aria-label="New"><svg width="16" height="16"><use href="#i-new"/></svg></button>
                  <button aria-label="Delete"><svg width="16" height="16"><use href="#i-del"/></svg></button>
                  <button aria-label="Edit"><svg width="16" height="16"><use href="#i-edit"/></svg></button>
                  <button aria-label="Copy"><svg width="16" height="16"><use href="#i-dup"/></svg></button>
                </div>
              </div>
              <div class="field vertices"><label class="name" for="vert">Vertices</label><button class="vert" id="vert"><svg width="16" height="14" viewBox="0 0 16 14"><path d="M5 1h8l-4 4h6v8H9v-3H1V5z" fill="#fff" stroke="#000" stroke-width="1.200"/><path d="M2 8l6-6M4 9l7-7M7 9l4-4M9 10l5-5M10 12l4-4M12 12l2-2" stroke="#a03030" stroke-width=".8"/></svg></button></div>
            </div>
          </section>
        </div>
      </div>
    </main>
  </div>
</div>
</body>
</html>
```
FILE: styles.css
```css
* { box-sizing: border-box; }
body { margin: 0; background: #30404e; font: 11px/13px "Liberation Sans", Arial, sans-serif; color: #000; }
button { font: inherit; color: inherit; border: 0; padding: 0; background: none; }
button svg { display: block; }
.sprite { position: absolute; width: 0; height: 0; }
.flip { transform: rotate(180deg); }
.ccw { transform: rotate(-90deg); }
.cw { transform: rotate(90deg); }

/* Glass window frame */
.window { height: 100vh; min-height: 720px; padding: 7px 8px 7px 7px; border-radius: 6px;
  background: linear-gradient(#b4cfec, #dbe8f6 8%, #dfeaf6 24%, #94b6dc 26%, #9cbce0 80%, #a9c8ec);
  box-shadow: inset 0 0 0 1px #30404e, inset 0 0 0 2px #c8e0f4; }
.client { height: 100%; display: flex; flex-direction: column; background: #b2b2b2; box-shadow: 0 0 0 1px #5a6c80; }

/* Title bar and menu */
.top { display: flex; height: 51px; flex: none; }
.app { width: 48px; height: 47px; background: #fff; border: 1px solid #ddd; display: grid; place-items: center; }
.top-main { flex: 1; display: flex; flex-direction: column; }
.titlebar { display: flex; height: 26px; background: #b1291e; }
.qat { display: flex; align-items: center; justify-content: space-around; width: 130px; background: #f9f9f7; border-left: 1px solid #b2b2b2; border-top: 1px solid #b2b2b2; }
.title { flex: 1; margin: 0; color: #fff; font-size: 12px; line-height: 27px; text-align: center; }
.controls { display: flex; }
.controls button { width: 36px; display: grid; place-items: center; color: #fff; }
.controls .help { font-size: 16px; font-weight: bold; }
.menu { display: flex; flex: 1; padding: 3px 0 0 4px; }
.menu-tab { height: 22px; margin-right: 2px; padding: 0 14px 2px; }
.menu-tab.on { background: #f9f9f7; padding: 0 11px 2px; border-left: 1px solid #fff; }
.menu-right { margin-left: auto; display: flex; gap: 4px; padding-top: 1px; align-items: start; }

/* Ribbon */
.ribbon { display: flex; flex: none; height: 95px; background: #f9f9f7; border-bottom: 2px solid #dcdcdc; }
.group { display: flex; flex-direction: column; padding: 0 2px; border-right: 2px solid #cfcfcf; border-left: 1px solid #fff; }
.g-general { width: 100px; }
.g-zones { width: 370px; }
.g-fill { flex: 1; }
.g-com { width: 60px; }
.g-bim { width: 88px; }
.tools { display: flex; height: 76px; }
.g-zones .tools { margin-left: -2px; }
.caption { height: 17px; background: #e8e8e8; border-top: 1px solid #dcdcdc; line-height: 17px; white-space: nowrap; display: flex; justify-content: center; }
.big { display: flex; flex-direction: column; align-items: center; justify-content: start; gap: 4px; padding-top: 5px; }
.big svg { overflow: visible; }
.w38 { width: 38px; }
.w39 { width: 39px; }
.w40 { width: 40px; }
.w46 { width: 46px; }
.w54 { width: 54px; }
button:disabled { color: #a3a3a3; }
.stack { display: flex; flex-direction: column; justify-content: space-around; align-items: start; border-left: 1px solid #d4d4d4; margin-left: 4px; padding: 2px 0 0 7px; }
.stack.wide { width: 88px; margin-left: 6px; }
.small { display: flex; gap: 4px; align-items: start; text-align: left; }
.small svg { flex: none; }

/* Work area */
.work { flex: 1; min-height: 0; display: flex; padding: 6px 6px 8px 7px; }
.left { width: 560px; display: flex; flex-direction: column; }
.frame { min-height: 0; background: #ebe8e2; border: 1px solid #a6a28e; padding: 3px; display: flex; box-shadow: inset 0 0 0 1px #fffef4; }
.tree-frame { flex: 417 1 0; }
.view-frame { flex: 437 1 0; }
.split { display: flex; gap: 2px; align-items: center; justify-content: center; flex: none; }
.split b { width: 2px; height: 2px; background: #666; }
.split.h { height: 9px; }
.split.v { width: 8px; flex-direction: column; }
.split.s { height: 6px; }

.tree { flex: 1; background: #fff; overflow: hidden; padding-left: 2px; }
.row { display: flex; align-items: center; height: 18px; white-space: nowrap; }
.g { width: 21px; height: 18px; flex: none; display: grid; place-items: center; background: repeating-linear-gradient(#888 0 1px, transparent 1px 2px) 10px 0 / 1px 100% no-repeat; }
.g.last { background-size: 1px 9px; }
.g.leaf, .g:has(button) { position: relative; }
.g.leaf::after, .g:has(button)::after { content: ""; width: 11px; height: 1px; position: absolute; left: 10px; top: 9px; background: repeating-linear-gradient(90deg, #888 0 1px, transparent 1px 2px); }
.ex { width: 9px; height: 9px; border: 1px solid #919191; border-radius: 1px; position: relative; z-index: 1; background: linear-gradient(#334f9b, #334f9b) center / 5px 1px no-repeat, linear-gradient(#fff, #e4e4e4); }
.ex.plus { background: linear-gradient(#334f9b, #334f9b) center / 5px 1px no-repeat, linear-gradient(#334f9b, #334f9b) center / 1px 5px no-repeat, linear-gradient(#fff, #e4e4e4); }
.ic { width: 16px; height: 16px; margin: 0 5px 0 1px; flex: none; }
.row span { height: 18px; line-height: 17px; padding: 0 2px; }
.row .sel { color: #fff; background: #3399ff; outline: 1px dotted #c60; outline-offset: -1px; }

/* Scroll bars */
.vbar { width: 18px; display: flex; flex-direction: column; background: linear-gradient(90deg, #e6e6e6, #f2f2f2 30%, #f4f4f4); padding: 0 2px 0 1px; }
.arr { width: 100%; height: 17px; display: grid; place-items: center; }
.vtrack { flex: 1; display: flex; flex-direction: column; }
.space-a { flex: 18; }
.space-b { flex: 177; }
.thumb { border: 1px solid #979797; border-radius: 2px; display: grid; place-items: center; background: linear-gradient(90deg, #f6f6f6, #e8e8ea 48%, #d2d3d7 50%, #c8c8cc); }
.vthumb { flex: 181; }
.vthumb b { width: 7px; height: 8px; background: repeating-linear-gradient(#666 0 1px, transparent 1px 3px); }
.view-side { width: 21px; display: flex; flex-direction: column; }
.view-side .vbar { flex: 1; width: 21px; }
.mini { width: 19px; height: 20px; display: grid; place-items: center; }
.mid { justify-content: center; padding-top: 12px; }
.tilt { height: 16px; }
.view-main { flex: 1; min-width: 0; display: flex; flex-direction: column; }
.hbar { height: 17px; flex: none; display: flex; background: linear-gradient(#e4e4e4, #f0f0f0 30%); }
.hbar .arr { width: 17px; }
.htrack { flex: 1; display: flex; padding-left: 217px; }
.hthumb { width: 23px; height: 15px; margin-top: 1px; background: linear-gradient(#f6f6f6, #e8e8ea 48%, #d2d3d7 50%, #c8c8cc); }
.hthumb b { width: 8px; height: 7px; background: repeating-linear-gradient(90deg, #666 0 1px, transparent 1px 3px); }
.scene { flex: 1; min-height: 0; width: 100%; background: #c0c0c0; }
.axis { font: bold 10px "Liberation Sans", Arial, sans-serif; }

/* Right side */
.right { flex: 1; min-width: 0; display: flex; flex-direction: column; }
.tabs { display: flex; height: 13px; }
.tab { height: 13px; line-height: 13px; }
.tab-walls { width: 63px; padding-right: 6px; background: #dedad5; clip-path: polygon(0 100%, 13px 0, 50px 0, 100% 100%); }
.tab-adj { width: 67px; margin-left: -10px; padding-right: 8px; background: #fff; clip-path: polygon(0 7px, 6px 0, 54px 0, 100% 100%, 7px 100%); }
.pane { flex: 1; background: #dedad5; padding: 0 7px; }
.toolbar { display: flex; align-items: center; height: 30px; padding-top: 4px; }
.toolbar button { width: 23px; height: 22px; display: grid; place-items: center; }
.sep { width: 1px; height: 18px; background: #888; margin: 0 3px; }
.grid { height: 310px; background: #fff; border: 1px solid #828790; padding: 1px; }
table { width: 100%; table-layout: fixed; border-collapse: separate; border-spacing: 0; }
.c1 { width: 14%; }
.c2 { width: 13%; }
.c3 { width: 14.4%; }
.c4 { width: 11.6%; }
.c5 { width: 12.3%; }
.c6 { width: 12.9%; }
.c7 { width: 11.8%; }
th { height: 24px; padding: 0 6px; font-weight: normal; background: linear-gradient(#fff 45%, #f5f6f8 50%, #f1f2f4); border-right: 1px solid #e2e3e5; border-bottom: 2px solid #d8d8d8; }
td { height: 21px; padding: 0 3px; text-align: center; border-right: 1px solid #bcbcbc; border-bottom: 1px solid #bcbcbc; }
th:first-child, td:first-child { text-align: left; }
.on td { background: #c9dde8; }
td.off { background: #e9e9e9; }
.on td.off { background: #d8e3e7; }
td.warn { background: #ffffc8; }
td svg { display: block; margin: 0 auto; }
td input { appearance: none; display: block; width: 11px; height: 11px; margin: 0 auto 2px; border: 1px solid #666; background: #fff; }
td input:checked::before { content: ""; display: block; width: 7px; height: 7px; margin: 1px; background: #000; clip-path: polygon(0 35%, 35% 60%, 100% 0, 100% 35%, 35% 100%, 0 70%); }

.data { background: #eae7e2; border: 1px solid #a6a28e; box-shadow: inset 0 0 0 1px #fffef4; padding: 1px; }
.data h2 { margin: 0; padding: 0 3px; height: 17px; font-size: 12px; line-height: 17px; background: #d1cdc8; }
.fields { display: flex; flex-direction: column; gap: 6px; padding: 6px 9px 9px; }
.field { display: flex; align-items: center; height: 21px; }
.field.ref { height: 17px; }
.field.vertices { height: 24px; margin-top: 32px; }
.name { width: 132px; flex: none; }
.pick { flex: 1; position: relative; }
.pick::after { content: ""; position: absolute; right: 5px; top: 9px; border: 4px solid transparent; border-top-color: #000; border-bottom: 0; pointer-events: none; }
.pick select { appearance: none; display: block; width: 100%; height: 21px; padding: 0 3px; font: inherit; color: #000; border: 1px solid #707070; border-radius: 2px; background: linear-gradient(#f3f3f3, #ebebeb 48%, #dcdcdc 50%, #cdcdcd); box-shadow: inset 0 0 0 1px #f8f8f8; }
.lib-tools { display: flex; gap: 7px; margin-left: 13px; }
.vert { width: 24px; height: 24px; margin-left: 1px; display: grid; place-items: center; border: 1px solid #707070; border-radius: 2px; background: linear-gradient(#f3f3f3, #ebebeb 48%, #dcdcdc 50%, #cdcdcd); }
```
